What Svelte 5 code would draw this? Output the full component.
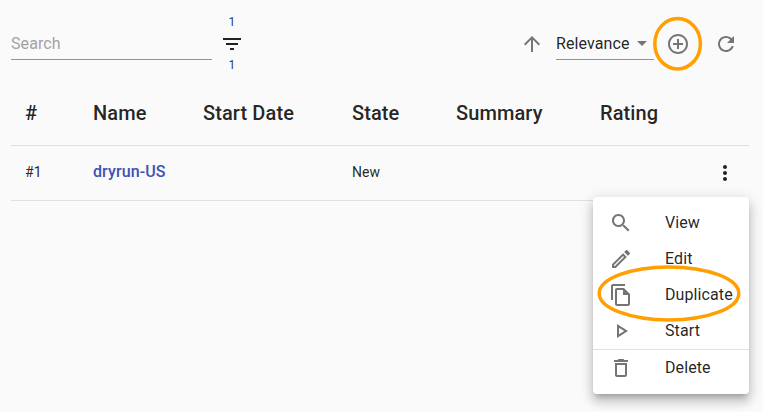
<script>
  const columns = ['#', 'Name', 'Start Date', 'State', 'Summary', 'Rating'];

  const icons = {
    filter: 'M10 18h4v-2h-4v2zM3 6v2h18V6H3zm3 7h12v-2H6v2z',
    up: 'M4 12l1.41 1.41L11 7.83V20h2V7.83l5.58 5.59L20 12l-8-8-8 8z',
    add: 'M13 7h-2v4H7v2h4v4h2v-4h4v-2h-4V7zm-1-5C6.48 2 2 6.48 2 12s4.48 10 10 10 10-4.48 10-10S17.52 2 12 2zm0 18c-4.41 0-8-3.59-8-8s3.59-8 8-8 8 3.59 8 8-3.59 8-8 8z',
    refresh: 'M17.65 6.35C16.2 4.9 14.21 4 12 4c-4.42 0-7.99 3.58-7.99 8s3.57 8 7.99 8c3.73 0 6.84-2.55 7.73-6h-2.08c-.82 2.33-3.04 4-5.65 4-3.31 0-6-2.69-6-6s2.69-6 6-6c1.66 0 3.14.69 4.22 1.78L13 11h7V4l-2.35 2.35z',
    more: 'M12 8c1.1 0 2-.9 2-2s-.9-2-2-2-2 .9-2 2 .9 2 2 2zm0 2c-1.1 0-2 .9-2 2s.9 2 2 2 2-.9 2-2-.9-2-2-2zm0 6c-1.1 0-2 .9-2 2s.9 2 2 2 2-.9 2-2-.9-2-2-2z',
    search: 'M15.5 14h-.79l-.28-.27C15.41 12.59 16 11.11 16 9.5 16 5.91 13.09 3 9.5 3S3 5.91 3 9.5 5.91 16 9.5 16c1.61 0 3.09-.59 4.23-1.57l.27.28v.79l5 4.99L20.49 19l-4.99-5zm-6 0C7.01 14 5 11.99 5 9.5S7.01 5 9.5 5 14 7.01 14 9.5 11.99 14 9.5 14z',
    edit: 'M14.06 9.02l.92.92L5.92 19H5v-.92l9.06-9.06M17.66 3c-.25 0-.51.1-.7.29l-1.83 1.83 3.75 3.75 1.83-1.83c.39-.39.39-1.02 0-1.41l-2.34-2.34c-.2-.2-.45-.29-.71-.29zm-3.6 3.19L3 17.25V21h3.75L17.81 9.94l-3.75-3.75z',
    copy: 'M16 1H4c-1.1 0-2 .9-2 2v14h2V3h12V1zm-1 4H8c-1.1 0-1.99.9-1.99 2L6 21c0 1.1.89 2 1.99 2H19c1.1 0 2-.9 2-2V11l-6-6zM8 21V7h6v5h5v9H8z',
    play: 'M10 8.64L15.27 12 10 15.36V8.64M8 5v14l11-7L8 5z',
    trash: 'M16 9v10H8V9h8m-1.5-6h-5l-1 1H5v2h14V4h-3.5l-1-1zM18 7H6v12c0 1.1.9 2 2 2h8c1.1 0 2-.9 2-2V7z'
  };

  const actions = [
    { icon: 'search', label: 'View' },
    { icon: 'edit', label: 'Edit' },
    { icon: 'copy', label: 'Duplicate' },
    { icon: 'play', label: 'Start' },
    { icon: 'trash', label: 'Delete', divided: true }
  ];
</script>

{#snippet icon(name)}
  <svg class="icon" viewBox="0 0 24 24" aria-hidden="true"><path d={icons[name]} /></svg>
{/snippet}

<main>
  <header>
    <input type="text" placeholder="Search" aria-label="Search" />
    <div class="filter">
      <span>1</span>
      {@render icon('filter')}
      <span>1</span>
    </div>
    <div class="tools">
      {@render icon('up')}
      <div class="select">Relevance<i></i></div>
      <div class="add">
        {@render icon('add')}
        <svg class="ring" width="52" height="58" aria-hidden="true">
          <ellipse cx="25.6" cy="28.7" rx="22.8" ry="25.2" />
        </svg>
      </div>
      {@render icon('refresh')}
    </div>
  </header>

  <section class="table">
    <div class="row head">
      {#each columns as column}<div>{column}</div>{/each}
    </div>
    <div class="row">
      <div class="cell">#1</div>
      <div class="cell name">dryrun-US</div>
      <div></div>
      <div class="cell">New</div>
      <div></div>
      <div></div>
      <div>{@render icon('more')}</div>
    </div>
  </section>

  <div class="menu">
    {#each actions as action}
      <div class="item" class:divided={action.divided}>
        {@render icon(action.icon)}
        <span>{action.label}</span>
        {#if action.icon === 'copy'}
          <svg class="ring" width="150" height="60" aria-hidden="true">
            <ellipse cx="73" cy="28.4" rx="69.8" ry="26.5" />
          </svg>
        {/if}
      </div>
    {/each}
  </div>
</main>

<style>
  :global(body) { background: #fafafa; }
  main {
    position: relative;
    box-sizing: border-box;
    height: 412px;
    padding: 0 14px 0 11px;
    overflow: hidden;
    background: #fafafa;
    color: rgba(0, 0, 0, 0.87);
    font: 16px/24px Roboto, sans-serif;
    letter-spacing: 0.1px;
  }
  .icon { display: block; width: 24px; height: 24px; flex: none; fill: currentColor; }
  header { display: flex; align-items: center; height: 88px; }
  input {
    box-sizing: border-box;
    width: 201px;
    height: 32px;
    padding: 0;
    border: 0;
    border-bottom: 1px solid #949494;
    border-radius: 0;
    background: none;
    font: inherit;
    letter-spacing: 0.1px;
    outline: 0;
  }
  input::placeholder { color: #a3a3a3; opacity: 1; }
  .filter {
    display: flex;
    flex-direction: column;
    align-items: center;
    margin-left: 8px;
    color: rgba(0, 0, 0, 0.87);
  }
  .filter span { color: #1a3e72; font-size: 12px; line-height: 19px; }
  .tools { display: flex; align-items: center; margin: 0 11px 0 auto; color: #757575; }
  .select {
    display: flex;
    align-items: center;
    justify-content: space-between;
    box-sizing: border-box;
    width: 98px;
    height: 32px;
    margin: 0 12px;
    padding-right: 7px;
    border-bottom: 1px solid #949494;
    color: rgba(0, 0, 0, 0.87);
  }
  .select i { border: 5px solid transparent; border-top-color: #757575; border-bottom: 0; }
  .add { position: relative; margin-right: 24px; }
  .ring {
    position: absolute;
    top: 50%;
    left: 50%;
    transform: translate(-50%, -50%);
    fill: none;
    stroke: #ff9f00;
    stroke-width: 3.5;
    pointer-events: none;
  }
  .row {
    display: grid;
    grid-template-columns: 68px 110px 149px 104px 144px 113px 24px;
    align-items: center;
    height: 54px;
    padding-left: 14px;
    border-bottom: 1px solid #e0e0e0;
    font-size: 14px;
  }
  .head { height: 57px; font-size: 20px; font-weight: 500; }
  .head div { padding-bottom: 8px; }
  .cell { padding-bottom: 2px; }
  .name { color: #3f51b5; font-size: 16px; font-weight: 500; }
  .menu {
    position: absolute;
    top: 197px;
    left: 593px;
    box-sizing: border-box;
    width: 156px;
    height: 197px;
    padding: 8px 0;
    border-radius: 4px;
    background: #fff;
    box-shadow: 0 5px 5px -3px rgba(0, 0, 0, 0.2), 0 8px 10px 1px rgba(0, 0, 0, 0.14),
      0 3px 14px 2px rgba(0, 0, 0, 0.12);
  }
  .item { position: relative; display: flex; align-items: center; height: 36px; padding-left: 16px; color: #757575; }
  .item span { margin-left: 32px; color: rgba(0, 0, 0, 0.87); }
  .divided { border-top: 1px solid #e0e0e0; }
</style>
